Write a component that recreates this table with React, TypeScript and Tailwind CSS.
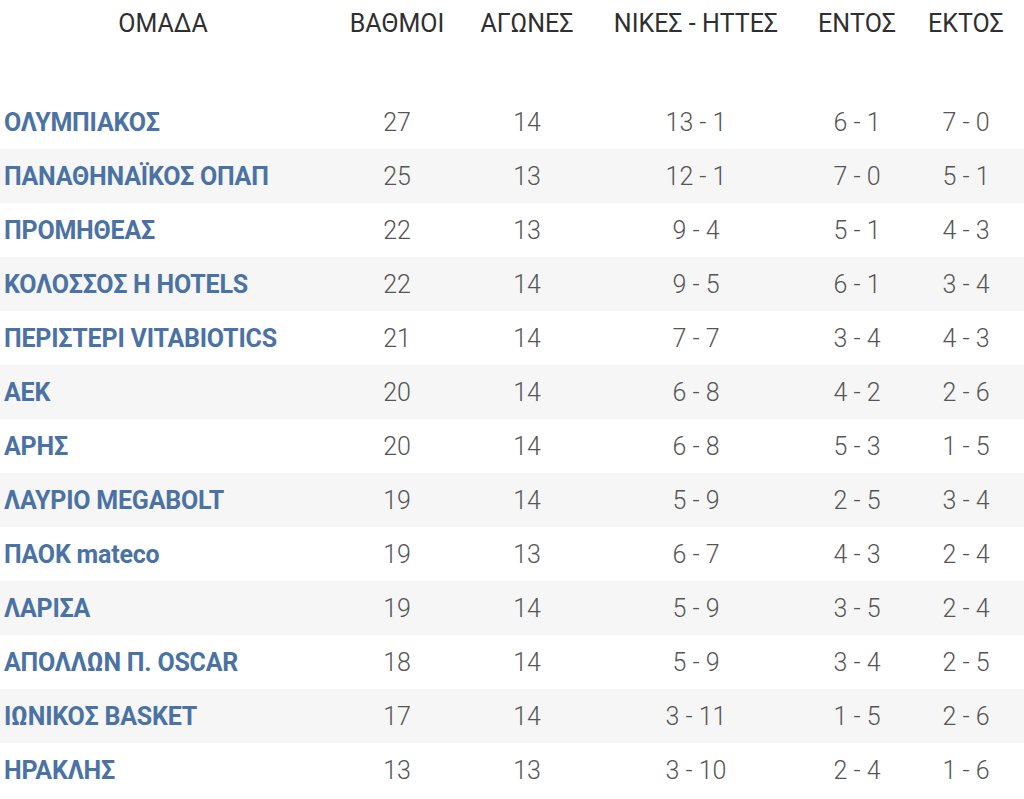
import React from 'react';

interface Team {
  name: string;
  points: number;
  games: number;
  record: string;
  home: string;
  away: string;
}

const teams: Team[] = [
  { name: 'ΟΛΥΜΠΙΑΚΟΣ', points: 27, games: 14, record: '13 - 1', home: '6 - 1', away: '7 - 0' },
  { name: 'ΠΑΝΑΘΗΝΑΪΚΟΣ ΟΠΑΠ', points: 25, games: 13, record: '12 - 1', home: '7 - 0', away: '5 - 1' },
  { name: 'ΠΡΟΜΗΘΕΑΣ', points: 22, games: 13, record: '9 - 4', home: '5 - 1', away: '4 - 3' },
  { name: 'ΚΟΛΟΣΣΟΣ H HOTELS', points: 22, games: 14, record: '9 - 5', home: '6 - 1', away: '3 - 4' },
  { name: 'ΠΕΡΙΣΤΕΡΙ VITABIOTICS', points: 21, games: 14, record: '7 - 7', home: '3 - 4', away: '4 - 3' },
  { name: 'ΑΕΚ', points: 20, games: 14, record: '6 - 8', home: '4 - 2', away: '2 - 6' },
  { name: 'ΑΡΗΣ', points: 20, games: 14, record: '6 - 8', home: '5 - 3', away: '1 - 5' },
  { name: 'ΛΑΥΡΙΟ MEGABOLT', points: 19, games: 14, record: '5 - 9', home: '2 - 5', away: '3 - 4' },
  { name: 'ΠΑΟΚ mateco', points: 19, games: 13, record: '6 - 7', home: '4 - 3', away: '2 - 4' },
  { name: 'ΛΑΡΙΣΑ', points: 19, games: 14, record: '5 - 9', home: '3 - 5', away: '2 - 4' },
  { name: 'ΑΠΟΛΛΩΝ Π. OSCAR', points: 18, games: 14, record: '5 - 9', home: '3 - 4', away: '2 - 5' },
  { name: 'ΙΩΝΙΚΟΣ BASKET', points: 17, games: 14, record: '3 - 11', home: '1 - 5', away: '2 - 6' },
  { name: 'ΗΡΑΚΛΗΣ', points: 13, games: 13, record: '3 - 10', home: '2 - 4', away: '1 - 6' },
];

const cols = 'grid grid-cols-[326px_142px_118px_220px_102px_116px]';

const App: React.FC = () => {
  return (
    <div className="w-[1024px] h-[799px] overflow-hidden bg-white font-['Roboto',sans-serif]">
      <div className={`${cols} h-[95px] pt-[9px] text-[25px] leading-[30px] text-[#2f2f2f] text-center`}>
        <div>ΟΜΑΔΑ</div>
        <div>ΒΑΘΜΟΙ</div>
        <div>ΑΓΩΝΕΣ</div>
        <div>ΝΙΚΕΣ - ΗΤΤΕΣ</div>
        <div>ΕΝΤΟΣ</div>
        <div>ΕΚΤΟΣ</div>
      </div>

      {teams.map((team, i) => (
        <div
          key={team.name}
          className={`${cols} h-[54px] items-center pt-[2px] ${i % 2 === 1 ? 'bg-[#f6f6f7]' : 'bg-white'}`}
        >
          <div className="pl-[4px] text-[25px] font-bold tracking-[-0.2px] text-[#4b72a4] whitespace-nowrap">{team.name}</div>
          <div className="text-center text-[25px] font-light text-[#555]">{team.points}</div>
          <div className="text-center text-[25px] font-light text-[#555]">{team.games}</div>
          <div className="text-center text-[25px] font-light text-[#555]">{team.record}</div>
          <div className="text-center text-[25px] font-light text-[#555]">{team.home}</div>
          <div className="text-center text-[25px] font-light text-[#555]">{team.away}</div>
        </div>
      ))}
    </div>
  );
};

export default App;
